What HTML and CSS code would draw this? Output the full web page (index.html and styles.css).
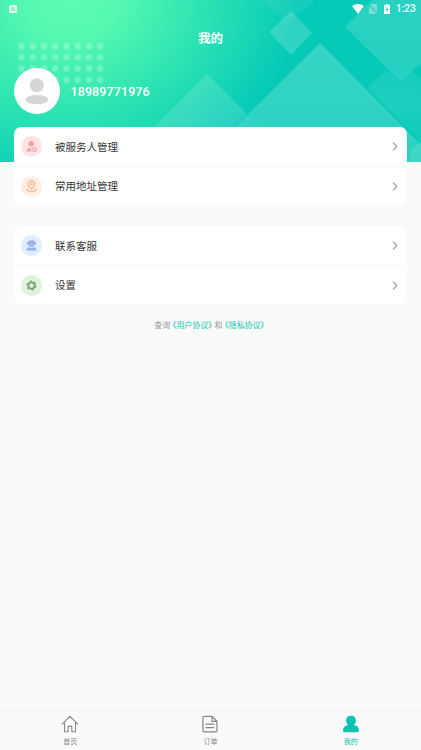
FILE: index.html
```html
<!DOCTYPE html>
<html lang="zh-CN">
<head>
<meta charset="utf-8">
<title>我的</title>
<link rel="stylesheet" href="styles.css">
</head>
<body>
<div class="app">
  <svg class="backdrop" viewBox="0 0 421 162" aria-hidden="true">
    <defs>
      <radialGradient id="glow" gradientUnits="userSpaceOnUse" cx="0" cy="0" r="1" gradientTransform="translate(72 2) rotate(-12) scale(230 190)">
        <stop offset="0" stop-color="#5bfcb0"/>
        <stop offset=".2" stop-color="#55f8b0"/>
        <stop offset=".6" stop-color="#2be2b3"/>
        <stop offset="1" stop-color="#06cab8"/>
      </radialGradient>
      <linearGradient id="fade" x1="0" y1="0" x2="0" y2="1">
        <stop offset="0" stop-color="#fff" stop-opacity=".2"/>
        <stop offset="1" stop-color="#fff" stop-opacity=".14"/>
      </linearGradient>
      <linearGradient id="rise" x1="0" y1="0" x2="0" y2="1">
        <stop offset="0" stop-color="#fff" stop-opacity=".14"/>
        <stop offset="1" stop-color="#fff" stop-opacity=".13"/>
      </linearGradient>
      <linearGradient id="shade" x1="0" y1="0" x2="0" y2="1">
        <stop offset="0" stop-color="#fff" stop-opacity=".07"/>
        <stop offset=".5" stop-color="#fff" stop-opacity=".09"/>
        <stop offset="1" stop-color="#fff" stop-opacity=".04"/>
      </linearGradient>
      <pattern id="dots" x="15.900" y="40.4" width="11.25" height="11.3" patternUnits="userSpaceOnUse">
        <circle cx="5.6" cy="5.6" r="3.2" fill="#fff" fill-opacity=".24"/>
      </pattern>
    </defs>
    <rect width="421" height="162" fill="url(#glow)"/>
    <path d="M260 0L287 23L315 0Z" fill="#fff" fill-opacity=".06"/>
    <path d="M291 11L312 33L291 55L269 32Z" fill="#fff" fill-opacity=".17"/>
    <path d="M207 74L247 114L199 162H119Z" fill="#fff" fill-opacity=".14"/>
    <path d="M247 114L260 127H234Z" fill="#fff" fill-opacity=".03"/>
    <path d="M367 88L386 70L401 82L412 71L421 79V142Z" fill="url(#shade)"/>
    <path d="M421 142L410 151V162H421Z" fill="#fff" fill-opacity=".1"/>
    <path d="M372 0L345 27L401 82L421 63V0Z" fill="url(#rise)"/>
    <path d="M320 43L438 162H200Z" fill="url(#fade)"/>
    <rect x="16" y="40.4" width="90" height="45.2" fill="url(#dots)"/>
  </svg>

  <div class="status">
    <svg class="status-app" viewBox="0 0 8 8"><rect width="8" height="8" rx="1" fill="#dffff0"/><path d="M2 6l2-4 2 4M3 5h2" fill="none" stroke="#61ddb0" stroke-width=".9"/></svg>
    <svg class="wifi" viewBox="0 0 12 10"><path d="M0 2Q6-2 12 2L6 10Z" fill="#fff"/></svg>
    <svg class="sim" viewBox="0 0 8 10"><path d="M2.5 0H8V10H0V2.5Z" fill="#fff" fill-opacity=".35"/><path d="M0 1L8 9" stroke="#25c9b8" stroke-width="1.2"/></svg>
    <svg class="battery" viewBox="0 0 6 10"><path d="M1.700 0h2.6v1H6v9H0V1h1.700z" fill="#fff"/><path d="M3.600 2.500L1.600 6H3L2.500 8.500 4.500 5H3.200z" fill="#24c6b6"/></svg>
    <span class="clock">1:23</span>
  </div>

  <h1 class="title">我的</h1>

  <div class="profile">
    <svg class="avatar" viewBox="0 0 46 46"><circle cx="23" cy="23" r="23" fill="#fff"/><circle cx="22.8" cy="17.2" r="7" fill="#d6d6d6"/><ellipse cx="23" cy="31.6" rx="11.3" ry="4.7" fill="#d6d6d6"/></svg>
    <span class="phone">18989771976</span>
  </div>

  <div class="card">
    <div class="row">
      <svg class="icon" viewBox="0 0 21 21"><circle cx="10.5" cy="10.5" r="10.5" fill="#ffe3e5"/><g fill="#f5a3a9"><circle cx="10.3" cy="7.8" r="2.8"/><path d="M5.500 15.500c0-2.500 1.600-3.700 4.800-3.500v3.500z"/></g><circle cx="13.5" cy="13.7" r="1.8" fill="#ffe3e5" stroke="#f5a3a9" stroke-width="1.1"/></svg>
      <span class="label">被服务人管理</span>
      <svg class="chevron" viewBox="0 0 6 9"><path d="M1 .7L4.800 4.500 1 8.300"/></svg>
    </div>
    <div class="row">
      <svg class="icon" viewBox="0 0 21 21"><circle cx="10.5" cy="10.5" r="10.5" fill="#ffeee1"/><g fill="none" stroke="#f4b78f" stroke-width="1.2"><path d="M10.500 13C8.400 11 7.300 9.600 7.300 8.100a3.200 3.200 0 0 1 6.400 0c0 1.500-1.100 2.900-3.200 4.900z"/><circle cx="10.5" cy="8" r=".7"/><path d="M7 12.700c-1.500.5-1.500 1.500 0 2.100 2 .7 5 .7 7 0 1.500-.6 1.500-1.600 0-2.100"/></g></svg>
      <span class="label">常用地址管理</span>
      <svg class="chevron" viewBox="0 0 6 9"><path d="M1 .7L4.800 4.500 1 8.300"/></svg>
    </div>
  </div>

  <div class="card">
    <div class="row">
      <svg class="icon" viewBox="0 0 21 21"><circle cx="10.5" cy="10.5" r="10.5" fill="#e2ebff"/><g fill="#97b2e7"><path d="M6.500 7.500Q7 5.200 10.500 5.200t4 2.300l.7.8v1.200h-1.400Q13 12 10.500 12T7.200 9.500H5.800V8.300z"/><path d="M5.300 15.500c0-2 1.300-3 3.200-3.300l2 1 2-1c1.900.3 3.200 1.300 3.200 3.300z"/></g><path d="M8.500 9q2 1.200 4 0" fill="none" stroke="#c5d6fa" stroke-width=".7"/></svg>
      <span class="label">联系客服</span>
      <svg class="chevron" viewBox="0 0 6 9"><path d="M1 .7L4.800 4.500 1 8.300"/></svg>
    </div>
    <div class="row">
      <svg class="icon" viewBox="0 0 21 21"><circle cx="10.5" cy="10.5" r="10.5" fill="#dff2dc"/><circle cx="10.5" cy="10.5" r="3.1" fill="none" stroke="#7fa379" stroke-width="1.8"/><circle cx="10.5" cy="10.5" r="4.3" fill="none" stroke="#7fa379" stroke-width="1.4" stroke-dasharray="2.25 2.25"/></svg>
      <span class="label">设置</span>
      <svg class="chevron" viewBox="0 0 6 9"><path d="M1 .7L4.800 4.500 1 8.300"/></svg>
    </div>
  </div>

  <p class="legal"><span>查询</span><a>《用户协议》</a><span>和</span><a>《隐私协议》</a></p>

  <nav class="tabs">
    <div class="tab">
      <svg class="tab-icon" viewBox="0 0 18 18"><path d="M1.200 9.200L9 1.400l7.800 7.800M3.500 7.500v9.200h3.700v-5.300h3.600v5.300h3.700V7.500" fill="none" stroke="#888" stroke-width="1.1" stroke-linejoin="round" stroke-linecap="round"/></svg>
      <span>首页</span>
    </div>
    <div class="tab">
      <svg class="tab-icon" viewBox="0 0 18 18"><path d="M3.300 1.300h7.800l4.900 5v9.200q0 1.400-1.400 1.400H3.300q-1.400 0-1.400-1.400V2.700q0-1.400 1.400-1.400zM11 1.500v4.900h5M4.500 9.200h8.700M4.500 12.700h8.700" fill="none" stroke="#858585" stroke-width="1.2" stroke-linejoin="round"/></svg>
      <span>订单</span>
    </div>
    <div class="tab active">
      <svg class="tab-icon" viewBox="0 0 18 18"><path d="M9 .7c3 0 4.900 2 4.900 4.800 0 2-.9 3.600-2.100 4.600 3.500.8 5.200 2.400 5.200 5 0 1.600-.6 2.200-2 2.200H3c-1.400 0-2-.6-2-2.200 0-2.600 1.700-4.200 5.200-5C5 9.100 4.100 7.500 4.100 5.500 4.100 2.700 6 .7 9 .7z" fill="#08c3b1"/></svg>
      <span>我的</span>
    </div>
  </nav>
</div>
</body>
</html>
```
FILE: styles.css
```css
* {
  box-sizing: border-box;
}

body {
  margin: 0;
  background: #fafafa;
  color: #333;
  font-family: Roboto, "Noto Sans CJK SC", sans-serif;
}

.app {
  position: relative;
  display: flex;
  flex-direction: column;
  height: 750px;
  overflow: hidden;
}

.backdrop {
  position: absolute;
  top: 0;
  left: 0;
  z-index: -1;
  width: 421px;
  height: 162px;
}

.status {
  display: flex;
  align-items: center;
  height: 17px;
  padding: 0 6px 0 9px;
  color: #fff;
}

.status-app {
  width: 8px;
  height: 8px;
  margin-right: auto;
}

.wifi {
  width: 12px;
  height: 10px;
  margin-right: 5px;
}

.sim {
  width: 8px;
  height: 10px;
  margin-right: 7px;
}

.battery {
  width: 6px;
  height: 10px;
  margin-right: 6px;
}

.clock {
  width: 19px;
  font-size: 10px;
  font-weight: 500;
  line-height: 17px;
  white-space: nowrap;
}

.title {
  margin: 12px 0 0;
  color: #fff;
  font-size: 12.5px;
  font-weight: 700;
  line-height: 20px;
  text-align: center;
}

.profile {
  display: flex;
  align-items: center;
  gap: 10.5px;
  margin: 19px 14px 13px;
}

.avatar {
  width: 46px;
  height: 46px;
}

.phone {
  color: #fff;
  font-size: 12.5px;
  font-weight: 500;
  letter-spacing: 0.1px;
}

.card {
  height: 78px;
  margin: 0 14px 21px;
  border-radius: 7px;
  background: #fff;
}

.row {
  display: flex;
  align-items: center;
  height: 39px;
  padding: 0 9px 0 7px;
}

.row + .row {
  border-top: 1px solid #f8f8f8;
}

.icon {
  width: 21px;
  height: 21px;
  margin-right: 13px;
}

.label {
  flex: 1;
  padding-top: 2px;
  font-size: 10.5px;
  line-height: 16px;
}

.chevron {
  width: 6px;
  height: 9px;
  fill: none;
  stroke: #999;
  stroke-width: 1.2;
}

.legal {
  display: flex;
  justify-content: center;
  margin: -6px 0 0;
  color: #999;
  font-size: 8px;
  letter-spacing: -0.1px;
  line-height: 14px;
}

.legal a {
  margin: 0 -1.5px;
  color: #15c5b4;
}

.tabs {
  display: flex;
  height: 40px;
  margin-top: auto;
  border-top: 1px solid #f3f3f3;
}

.tab {
  display: flex;
  flex: 1;
  flex-direction: column;
  align-items: center;
  padding-top: 4px;
  color: #888;
  font-size: 7px;
  line-height: 10px;
}

.tab-icon {
  width: 18px;
  height: 18px;
  margin-bottom: 4px;
}

.active {
  color: #08c3b1;
}
```
